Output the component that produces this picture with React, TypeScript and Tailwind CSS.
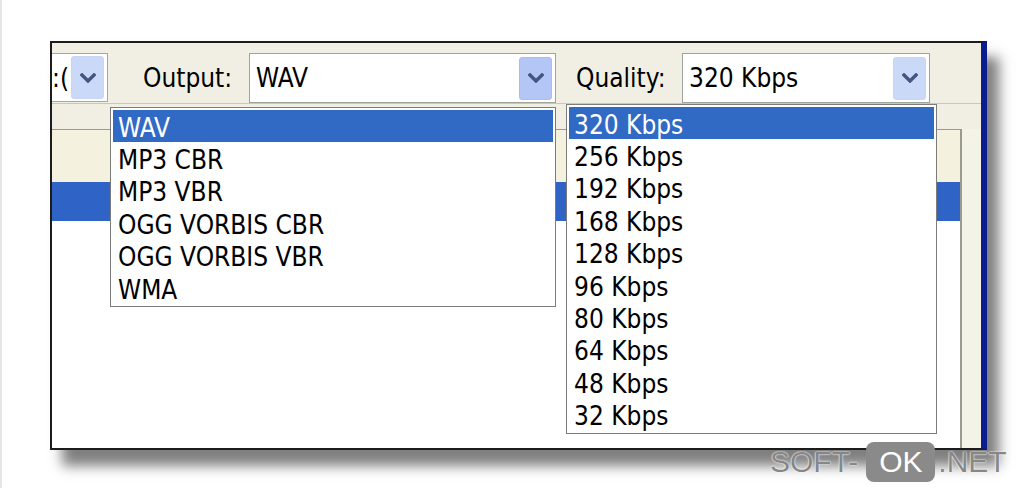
const outputs = ["WAV", "MP3 CBR", "MP3 VBR", "OGG VORBIS CBR", "OGG VORBIS VBR", "WMA"];
const rates = ["320", "256", "192", "168", "128", "96", "80", "64", "48", "32"];

const Chevron = () => (
  <svg width="16" height="10" viewBox="0 0 16 10" fill="none">
    <path d="M2 2l6 6 6-6" stroke="#435680" strokeWidth="3.4" strokeLinecap="square" />
  </svg>
);

const DropButton = ({ light }: { light?: boolean }) => (
  <div
    className={`flex h-[43px] w-[33px] items-center justify-center rounded-[3px] border ${
      light ? "border-[#c8d6f6] bg-[#cbd9f9]" : "border-[#a9bdf0] bg-[#b3c6f6]"
    }`}
  >
    <Chevron />
  </div>
);

export default function App() {
  return (
    <div
      className="relative h-[488px] w-[1020px] overflow-hidden border-l-2 border-[#e6e6e6] bg-white text-black"
      style={{ fontFamily: '"DejaVu Sans Condensed", "DejaVu Sans", sans-serif' }}
    >
      {/* window */}
      <div className="ml-[48px] mt-[41px] flex h-[409px] w-[937px] flex-col border-2 border-r-[6px] border-[#1c1c1c] border-r-[#0b1d8c] bg-[#f1efe3] shadow-[12px_16px_12px_rgba(0,0,0,0.5)]">
        {/* toolbar */}
        <div className="flex h-[61px] items-start border-b border-[#c9c7ba] pt-[10px] text-[26px]">
          <div className="flex h-[49px] w-[56px] items-center justify-between border border-l-0 border-[#a3a79c] bg-white pr-[3px]">
            <span className="leading-none">:(</span>
            <DropButton light />
          </div>
          <span className="ml-[35px] flex h-[50px] w-[94px] items-center">Output:</span>
          <div className="ml-[12px] flex h-[50px] w-[307px] items-center justify-between border border-[#9fa49a] bg-white pl-[6px] pr-[3px]">
            <span>WAV</span>
            <DropButton />
          </div>
          <span className="ml-[20px] flex h-[50px] w-[94px] items-center">Quality:</span>
          <div className="ml-[12px] flex h-[50px] w-[248px] items-center justify-between border border-[#9fa49a] bg-white pl-[6px] pr-[3px]">
            <span>320 Kbps</span>
            <DropButton light />
          </div>
        </div>
        <div className="h-[25px]" />
        {/* list panel behind */}
        <div className="flex flex-1">
          <div className="flex w-[910px] flex-col border-r-2 border-t border-[#9a9a90] bg-white">
            <div className="h-[52px] bg-[#f4f1df]" />
            <div className="h-[39px] bg-[#2f64c6]" />
            <div className="flex-1 bg-white" />
          </div>
          <div className="flex-1 bg-[#f4f3e8]" />
        </div>
      </div>

      {/* output dropdown */}
      <div className="absolute left-[108px] top-[107px] w-[446px] border border-[#7c7c7c] bg-white p-[2px] text-[26px]">
        {outputs.map((o, i) => (
          <div
            key={o}
            className={`flex h-[32.4px] items-center pl-[5px] pt-[4px] ${i === 0 ? "bg-[#316ac5] text-white" : ""}`}
          >
            {o}
          </div>
        ))}
      </div>

      {/* quality dropdown */}
      <div className="absolute left-[564px] top-[104px] w-[371px] border border-[#7c7c7c] bg-white p-[2px] text-[26px]">
        {rates.map((r, i) => (
          <div
            key={r}
            className={`flex h-[32.4px] items-center pl-[5px] pt-[4px] ${i === 0 ? "bg-[#316ac5] text-white" : ""}`}
          >
            {r} Kbps
          </div>
        ))}
      </div>

      {/* watermark */}
      <div
        className="absolute left-[768px] top-[442px] flex items-center text-[30px] leading-none text-[#878787]"
        style={{ fontFamily: '"Liberation Sans", Arial, sans-serif', textShadow: "0 0 2px #fff, 0 0 1px #fff" }}
      >
        <span>SOFT-</span>
        <span className="ml-[8px] flex h-[40px] w-[69px] items-center justify-center rounded-[8px] bg-[#8a8a8a] text-white [text-shadow:none]">
          OK
        </span>
        <span className="ml-[3px]">.NET</span>
      </div>
    </div>
  );
}
